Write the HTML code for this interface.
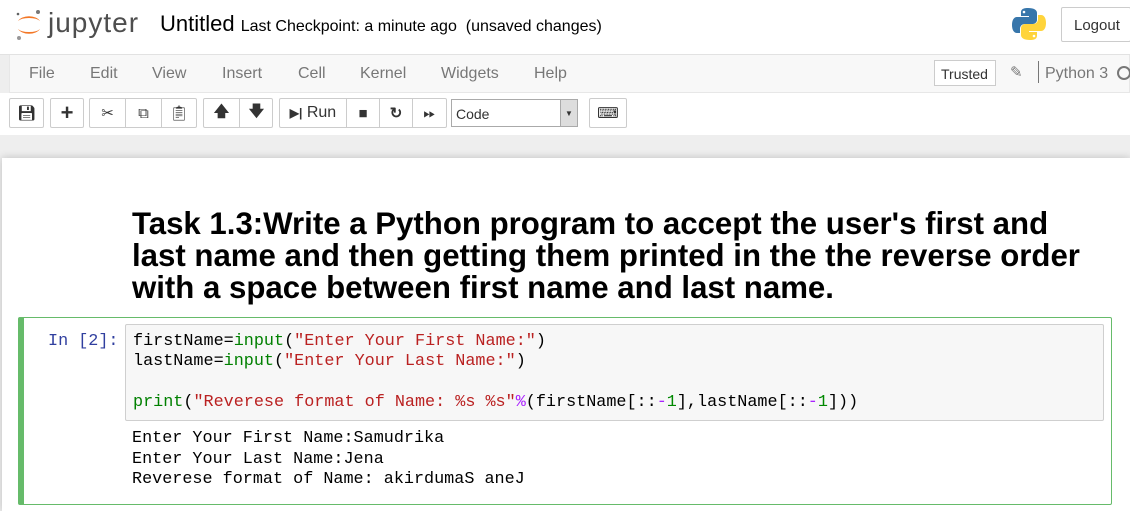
<!DOCTYPE html>
<html><head><meta charset="utf-8"><style>
*{margin:0;padding:0;box-sizing:border-box}
body{width:1130px;height:511px;overflow:hidden;background:#eee;font-family:"Liberation Sans",sans-serif;position:relative}
.abs{position:absolute}
#hdr{left:0;top:0;width:1130px;height:55px;background:#fff;border-bottom:1px solid #e2e2e2}
#menu{left:9px;top:55px;width:1121px;height:38px;background:#f8f8f8;border:1px solid #e7e7e7;border-top:none}
.mi{position:absolute;top:10px;font-size:16px;color:#777}
#tb{left:0;top:93px;width:1130px;height:42px;background:#fff}
.btn{position:absolute;top:98px;height:30px;border:1px solid #ccc;background:#fff;border-radius:2px}
.btn span{position:absolute;top:0;height:28px;border-left:1px solid #ccc;display:flex;align-items:center;justify-content:center;font-size:15px;color:#333}
#nb{left:2px;top:158px;width:1128px;height:353px;background:#fff;box-shadow:0 0 8px rgba(0,0,0,.2)}
h1{position:absolute;left:132px;top:208px;font-size:31.2px;line-height:32px;font-weight:bold;color:#000;width:990px;white-space:nowrap}
#cell{left:18px;top:317px;width:1094px;height:188px;border:1px solid #66bb6a;border-left:6px solid #66bb6a;border-radius:2px}
.mono{font-family:"Liberation Mono",monospace;font-size:16.8px;white-space:pre}
#code{left:125px;top:324px;width:979px;height:97px;background:#f7f7f7;border:1px solid #cfcfcf;border-radius:2px}
.s{color:#ba2121}.b{color:#008000}.n{color:#080}.o{color:#aa22ff}
</style></head><body>
<div id="hdr" class="abs"></div>
<svg class="abs" style="left:14px;top:8px" width="30" height="34" viewBox="0 0 30 34">
<path d="M4 13 A12 8 0 0 1 26 13 A12 5 0 0 0 4 13Z" fill="#f37726"/>
<path d="M4 21 A12 8 0 0 0 26 21 A12 5 0 0 1 4 21Z" fill="#f37726"/>
<circle cx="24" cy="4" r="2" fill="#767677"/><circle cx="5" cy="30" r="2" fill="#989798"/><circle cx="4" cy="6" r="1.3" fill="#616262"/></svg>
<div class="abs" style="left:48px;top:7px;font-size:28px;color:#4e4e4e;letter-spacing:1px">jupyter</div>
<div class="abs" style="left:160px;top:11px;font-size:22px;color:#000">Untitled <span style="font-size:16px">Last Checkpoint: a minute ago &nbsp;(unsaved changes)</span></div>
<svg class="abs" style="left:1012px;top:7px" width="34" height="34" viewBox="0 0 34 34">
<path d="M16 1c-7 0-7 3-7 5v3h8v1H5c-3 0-5 3-5 8s2 8 5 8h3v-4c0-3 2-5 5-5h8c2 0 4-2 4-4V6c0-3-3-5-9-5z" fill="#3776ab"/>
<path d="M18 33c7 0 7-3 7-5v-3h-8v-1h12c3 0 5-3 5-8s-2-8-5-8h-3v4c0 3-2 5-5 5h-8c-2 0-4 2-4 4v7c0 3 3 5 9 5z" fill="#ffd43b"/>
<circle cx="12" cy="5" r="1.3" fill="#fff"/><circle cx="22" cy="29" r="1.3" fill="#fff"/></svg>
<div class="abs" style="left:1061px;top:7px;width:70px;height:35px;border:1px solid #ccc;border-radius:2px;font-size:15px;color:#333;padding:9px 0 0 12px">Logout</div>
<div id="menu" class="abs">
<div class="mi" style="left:19px">File</div><div class="mi" style="left:80px">Edit</div><div class="mi" style="left:142px">View</div><div class="mi" style="left:212px">Insert</div><div class="mi" style="left:288px">Cell</div><div class="mi" style="left:350px">Kernel</div><div class="mi" style="left:431px">Widgets</div><div class="mi" style="left:524px">Help</div>
<div style="position:absolute;left:924px;top:5px;width:62px;height:26px;border:1px solid #ccc;background:#fff;font-size:14px;color:#333;padding:5px 0 0 6px">Trusted</div>
<div style="position:absolute;left:1000px;top:8px;color:#777;font-size:15px">✎</div>
<div style="position:absolute;left:1028px;top:6px;width:1px;height:22px;background:#777"></div>
<div class="mi" style="left:1035px">Python 3</div>
<div style="position:absolute;left:1107px;top:11px;width:14px;height:14px;border:2px solid #777;border-radius:50%"></div>
</div>
<div id="tb" class="abs"></div>
<div class="btn" style="left:9px;width:35px"><span style="left:0;width:33px;border:none">💾︎</span></div>
<div class="btn" style="left:50px;width:34px"><span style="left:0;width:32px;border:none;font-size:22px;font-weight:bold">+</span></div>
<div class="btn" style="left:89px;width:108px"><span style="left:0;width:35px;border:none">✂</span><span style="left:35px;width:36px">⧉</span><span style="left:71px;width:35px">📋︎</span></div>
<div class="btn" style="left:203px;width:70px"><span style="left:0;width:35px;border:none;font-weight:bold">🡅</span><span style="left:35px;width:34px;font-weight:bold">🡇</span></div>
<div class="btn" style="left:279px;width:168px"><span style="left:0;width:66px;border:none;font-size:16px"><b style="font-size:12px">▶|</b>&nbsp;Run</span><span style="left:66px;width:33px">■</span><span style="left:99px;width:33px;font-weight:bold">↻</span><span style="left:132px;width:34px">⏩︎</span></div>
<div class="abs" style="left:451px;top:99px;width:127px;height:28px;border:1px solid #aaa;background:#fff;font-size:14px;color:#333;padding:6px 0 0 4px">Code<div style="position:absolute;right:0;top:0;width:17px;height:26px;background:#ddd;border-left:1px solid #aaa;font-size:8px;text-align:center;padding-top:9px">▼</div></div>
<div class="btn" style="left:589px;width:38px"><span style="left:0;width:36px;border:none">⌨</span></div>
<div id="nb" class="abs"></div>
<h1>Task 1.3:Write a Python program to accept the user's first and<br>last name and then getting them printed in the the reverse order<br>with a space between first name and last name.</h1>
<div id="cell" class="abs"></div>
<div class="abs mono" style="left:48px;top:332px;color:#303f9f;line-height:20px">In [2]:</div>
<div id="code" class="abs"></div>
<div class="abs mono" style="left:133px;top:332px;line-height:20.3px;color:#000">firstName=<span class="b">input</span>(<span class="s">"Enter Your First Name:"</span>)
lastName=<span class="b">input</span>(<span class="s">"Enter Your Last Name:"</span>)

<span class="b">print</span>(<span class="s">"Reverese format of Name: %s %s"</span><span class="o">%</span>(firstName[::<span class="o">-</span><span class="n">1</span>],lastName[::<span class="o">-</span><span class="n">1</span>]))</div>
<div class="abs mono" style="left:132px;top:429px;line-height:20.7px;color:#000">Enter Your First Name:Samudrika
Enter Your Last Name:Jena
Reverese format of Name: akirdumaS aneJ</div>
</body></html>
